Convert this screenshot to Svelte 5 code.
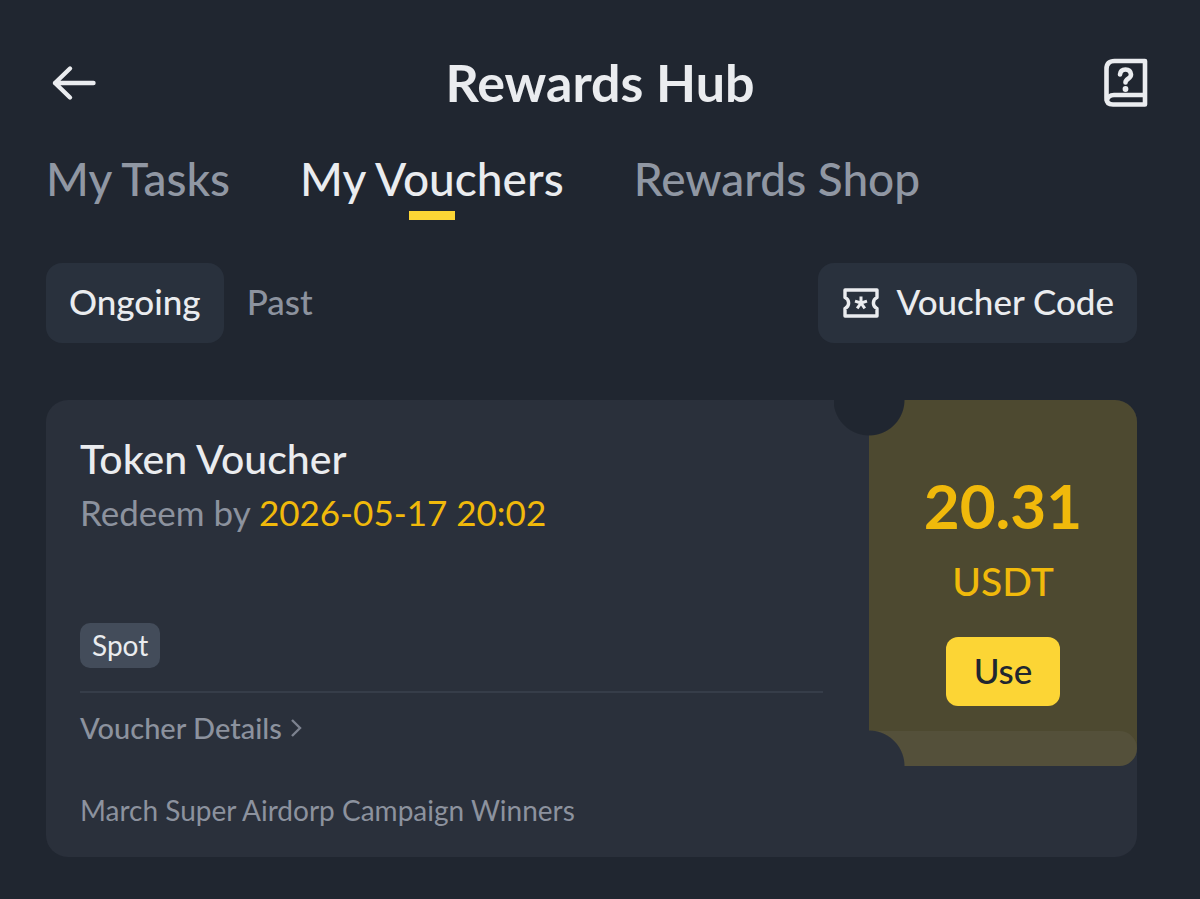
<script>
  const tabs = ['My Tasks', 'My Vouchers', 'Rewards Shop'];
  const filters = ['Ongoing', 'Past'];
  let activeTab = $state('My Vouchers');
  let activeFilter = $state('Ongoing');
</script>

<div class="page">
  <header>
    <button class="icon" aria-label="Back">
      <svg width="56" height="50" viewBox="0 0 56 50" fill="none" stroke="#eaecef" stroke-width="4.400" stroke-linecap="round" stroke-linejoin="round">
        <path d="M47.500 25H9M24 10.500L9 25l15 14.500" />
      </svg>
    </button>
    <h1>Rewards Hub</h1>
    <button class="icon" aria-label="Help">
      <svg width="44" height="50" viewBox="0 0 44 50" fill="none" stroke="#eaecef" stroke-width="4.600" stroke-linejoin="round">
        <path d="M41 3H10.500Q2.500 3 2.500 11V40.500Q2.500 46.500 9 46.500H41Z" />
        <path d="M2.500 43Q4 37 10 37H41" />
        <path d="M16 16.500Q16.500 11.500 21.500 11.500T27 16.500C27 21 21.500 20.500 21.500 24.500" stroke-linecap="round" />
        <circle cx="21.500" cy="31" r="2.900" fill="#eaecef" stroke="none" />
      </svg>
    </button>
  </header>

  <nav>
    {#each tabs as tab}
      <button class="tab" class:active={tab === activeTab} onclick={() => (activeTab = tab)}>{tab}</button>
    {/each}
  </nav>

  <div class="toolbar">
    {#each filters as filter}
      <button class="filter" class:active={filter === activeFilter} onclick={() => (activeFilter = filter)}>{filter}</button>
    {/each}
    <button class="code">
      <svg width="36" height="30" viewBox="0 0 36 30" fill="none" stroke="#eaecef" stroke-width="3.400" stroke-linejoin="round">
        <path d="M2 2H34V9.500A6 6 0 0 0 34 20.500V28H2V20.500A6 6 0 0 0 2 9.500Z" />
        <path d="M18 15V8.500M18 15L24 13.100M18 15L21.800 20.300M18 15L14.200 20.300M18 15L12 13.100" stroke-width="3" />
      </svg>
      <span class="label">Voucher Code</span>
    </button>
  </div>

  <article>
    <div class="top">
      <section class="info">
        <h2>Token Voucher</h2>
        <p class="redeem">Redeem by <time datetime="2026-05-17T20:02">2026-05-17 20:02</time></p>
        <span class="tag">Spot</span>
        <a href="#details">
          Voucher Details
          <svg width="12" height="20" viewBox="0 0 12 20" fill="none" stroke="#7c828f" stroke-width="2.400">
            <path d="M2 2L10 10L2 18" />
          </svg>
        </a>
      </section>
      <section class="value">
        <strong>20.31</strong>
        <span class="unit">USDT</span>
        <button class="use">Use</button>
      </section>
    </div>
    <p class="campaign">March Super Airdorp Campaign Winners</p>
  </article>
</div>

<style>
  :global(body) {
    margin: 0;
    background: #202630;
  }
  .page {
    box-sizing: border-box;
    padding: 48px 63px 42px 46px;
    font-family: Lato, "Open Sans", sans-serif;
    color: #eaecef;
  }
  button {
    padding: 0;
    border: 0;
    background: none;
    color: inherit;
    font: inherit;
    cursor: pointer;
  }
  svg {
    display: block;
    flex: none;
  }
  h1, h2, p {
    margin: 0;
  }
  header {
    display: grid;
    grid-template-columns: 1fr auto 1fr;
    align-items: center;
    height: 70px;
    margin-right: -17px;
  }
  .icon {
    justify-self: start;
  }
  .icon:last-child {
    justify-self: end;
    margin-right: 6px;
  }
  h1 {
    padding-bottom: 2px;
    font-size: 52px;
    line-height: 60px;
    font-weight: 700;
  }
  nav {
    display: flex;
    gap: 70px;
    margin-top: 32px;
  }
  .tab {
    display: flex;
    flex-direction: column;
    align-items: center;
    height: 70px;
    font-size: 46px;
    line-height: 58px;
    font-weight: 500;
    color: #9097a3;
    white-space: nowrap;
  }
  .tab.active {
    color: #eaecef;
  }
  .tab.active::after {
    content: "";
    width: 46px;
    height: 9px;
    margin-top: 3px;
    background: #fcd535;
  }
  .toolbar {
    display: flex;
    gap: 23px;
    height: 80px;
    margin-top: 43px;
    font-size: 35px;
    font-weight: 500;
  }
  .filter {
    padding-bottom: 4px;
    color: #8c929e;
  }
  .filter.active {
    padding: 0 23px 4px;
    border-radius: 16px;
    background: #29313d;
    color: #eaecef;
  }
  .code {
    display: flex;
    align-items: center;
    gap: 17px;
    margin-left: auto;
    padding: 0 23px 0 25px;
    border-radius: 16px;
    background: #29313d;
  }
  .label {
    padding-bottom: 4px;
  }
  article {
    margin-top: 57px;
    border-radius: 22px;
    background: #2a303b;
  }
  .top {
    display: grid;
    grid-template-columns: 1fr 268px;
  }
  .info {
    display: flex;
    flex-direction: column;
    align-items: flex-start;
    padding: 34px 46px 4px 34px;
  }
  h2 {
    font-size: 41px;
    line-height: 50px;
    font-weight: 500;
  }
  .redeem {
    font-size: 35px;
    line-height: 56px;
    color: #8c929e;
  }
  time {
    color: #f0b90b;
  }
  .tag {
    margin-top: 83px;
    padding: 0 12px;
    border-radius: 10px;
    background: #434c5a;
    font-size: 28px;
    line-height: 45px;
  }
  a {
    display: flex;
    align-items: center;
    align-self: stretch;
    gap: 8px;
    margin-top: 23px;
    border-top: 2px solid #363d49;
    font-size: 29px;
    line-height: 69px;
    font-weight: 500;
    color: #8c929e;
    text-decoration: none;
  }
  .value {
    position: relative;
    display: flex;
    flex-direction: column;
    align-items: center;
    box-sizing: border-box;
    padding-top: 69px;
    border-radius: 0 22px 22px 0;
    background: #4d4930;
    color: #f0b90b;
  }
  .value::before {
    content: "";
    position: absolute;
    inset: 0 0 0 -35px;
    z-index: 1;
    pointer-events: none;
    background:
      radial-gradient(circle at 35px 0, #202630 35px, transparent 36px),
      radial-gradient(circle at 35px 100%, #2a303b 35px, transparent 36px);
  }
  .value::after {
    content: "";
    position: absolute;
    inset: auto 0 0 0;
    height: 35px;
    border-radius: 0 22px 22px 0;
    background: #54503a;
  }
  strong {
    font-size: 62px;
    line-height: 72px;
    font-weight: 700;
  }
  .unit {
    margin-top: 15px;
    font-size: 39px;
    line-height: 50px;
    font-weight: 500;
  }
  .use {
    width: 114px;
    height: 69px;
    margin-top: 31px;
    padding-bottom: 4px;
    border-radius: 12px;
    background: #fcd535;
    color: #202630;
    font-size: 35px;
    font-weight: 500;
  }
  .campaign {
    padding: 19px 34px 22px;
    font-size: 28px;
    line-height: 50px;
    color: #8c929e;
  }
</style>
